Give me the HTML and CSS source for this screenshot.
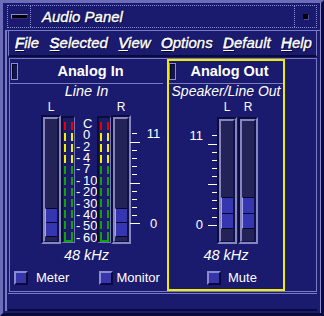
FILE: index.html
```html
<!DOCTYPE html>
<html lang="en">
<head>
<meta charset="utf-8">
<title>Audio Panel</title>
<link rel="stylesheet" href="styles.css">
</head>
<body>
<div class="window">
  <div class="titlebar">
    <div class="tb-btn tb-menu"><span class="menu-bar"></span></div>
    <div class="tb-title">Audio Panel</div>
    <div class="tb-btn tb-min"><span class="min-sq"></span></div>
  </div>
  <div class="client">
    <nav class="menubar">
      <span class="mi"><u>F</u>ile</span>
      <span class="mi"><u>S</u>elected</span>
      <span class="mi"><u>V</u>iew</span>
      <span class="mi"><u>O</u>ptions</span>
      <span class="mi"><u>D</u>efault</span>
      <span class="mi"><u>H</u>elp</span>
    </nav>
    <div class="content">
      <section class="panel panel-in">
        <div class="ph ph-in"><span class="toggle"></span><span class="ph-title">Analog In</span></div>
        <div class="sub">Line In</div>
        <div class="lr lr-in"><span>L</span><span>R</span></div>
        <div class="meters meters-in">
          <div class="fader fader-in" style="--below:4px;--th:29px"><div class="slot"><div class="thumb"><i></i><i></i></div></div></div>
          <div class="meter"><div class="bars"><span class="bar"></span><span class="bar"></span></div><div class="base"></div></div>
          <div class="scale">
            <div><span class="sg"></span>C</div>
            <div><span class="sg"></span>0</div>
            <div><span class="sg">-</span>2</div>
            <div><span class="sg">-</span>4</div>
            <div><span class="sg">-</span>7</div>
            <div><span class="sg">-</span>10</div>
            <div><span class="sg">-</span>20</div>
            <div><span class="sg">-</span>30</div>
            <div><span class="sg">-</span>40</div>
            <div><span class="sg">-</span>50</div>
            <div><span class="sg">-</span>60</div>
          </div>
          <div class="meter"><div class="bars"><span class="bar"></span><span class="bar"></span></div><div class="base"></div></div>
          <div class="fader fader-in" style="--below:4px;--th:29px"><div class="slot"><div class="thumb"><i></i><i></i></div></div></div>
          <div class="ticks ticks-in">
            <span class="tk"></span><span class="tk long"></span><span class="tk"></span><span class="tk"></span>
            <span class="tk"></span><span class="tk"></span><span class="tk long"></span><span class="tk"></span>
            <span class="tk"></span><span class="tk"></span><span class="tk"></span><span class="tk long"></span>
          </div>
          <div class="lbl lbl-in"><span>11</span><span>0</span></div>
        </div>
        <div class="rate">48 kHz</div>
        <div class="checks checks-in">
          <label class="cb"><span class="box"></span><span class="cbl cbl-meter">Meter</span></label>
          <label class="cb"><span class="box"></span><span class="cbl cbl-monitor">Monitor</span></label>
        </div>
      </section>
      <section class="panel panel-out">
        <div class="ph ph-out"><span class="toggle"></span><span class="ph-title">Analog Out</span></div>
        <div class="sub sub-out">Speaker/Line Out</div>
        <div class="lr lr-out"><span>L</span><span>R</span></div>
        <div class="meters meters-out">
          <div class="lbl lbl-out"><span>11</span><span>0</span></div>
          <div class="ticks ticks-out">
            <span class="tk"></span><span class="tk long"></span><span class="tk"></span><span class="tk"></span>
            <span class="tk"></span><span class="tk"></span><span class="tk long"></span><span class="tk"></span>
            <span class="tk"></span><span class="tk"></span><span class="tk"></span><span class="tk long"></span>
          </div>
          <div class="fader fader-out" style="--below:12px;--th:32px"><div class="slot"><div class="thumb"><i></i><i></i></div></div></div>
          <div class="fader fader-out" style="--below:12px;--th:32px"><div class="slot"><div class="thumb"><i></i><i></i></div></div></div>
        </div>
        <div class="rate">48 kHz</div>
        <div class="checks checks-out">
          <label class="cb"><span class="box"></span><span class="cbl cbl-mute">Mute</span></label>
        </div>
      </section>
    </div>
    <div class="status"></div>
  </div>
</div>
</body>
</html>
```

FILE: styles.css
```css
* { box-sizing: border-box; margin: 0; padding: 0; }
html, body { width: 324px; height: 316px; overflow: hidden; background: #1a1a6e; }
body { font-family: "Liberation Sans", Arial, sans-serif; color: #fff; }

.window {
  width: 324px; height: 316px;
  display: flex; flex-direction: column;
  border: 3px solid; border-color: #6c6cb8 #0a0a3a #0a0a3a #6c6cb8;
  padding: 2px 1px 2px 2px;
  box-shadow: inset -1px 0 0 #8a8ad2;
  background: #1a1a6e;
}

/* title bar */
.titlebar { flex: none; height: 23px; margin: 0 3px 0 2px; border: 1px dotted #8c8cd4; display: flex; }
.tb-btn { flex: none; display: flex; align-items: center; justify-content: center; }
.tb-menu { width: 23px; border-right: 1px dotted #8c8cd4; }
.tb-min { width: 22px; border-left: 1px dotted #8c8cd4; }
.menu-bar { width: 17px; height: 5px; background: #000; border: 1px solid #8c8cd4; border-right-color: #30307a; border-bottom-color: #30307a; }
.min-sq { width: 5px; height: 5px; background: #000; box-shadow: 1px 1px 0 #4a4aa0; }
.tb-title { flex: 1; padding-left: 11px; font-style: italic; font-size: 15px; line-height: 21px; -webkit-text-stroke: 0.35px #fff; text-shadow: 1px 1px 0 #05052a; }

/* client area */
.client { flex: 1; margin-top: 2px; border-top: 1px solid #7a7ac0; border-left: 2px solid #7a7ac0; padding: 0 3px 0 1px; display: flex; flex-direction: column; }
.menubar { flex: none; height: 26px; border-left: 1px solid #7a7ac0; border-right: 1px solid #7a7ac0; border-bottom: 2px solid #0a0a3a; display: flex; gap: 10.4px; padding-left: 6px; font-style: italic; font-size: 15px; line-height: 24px; -webkit-text-stroke: 0.35px #fff; text-shadow: 1px 1px 0 #05052a; }
.menubar u { text-decoration-thickness: 1px; text-underline-offset: 2px; }

.content { flex: none; height: 234px; margin: 1px 0 1px 1px; border: 1px solid #7a7ac0; display: flex; }
.panel { display: flex; flex-direction: column; }
.panel-in { width: 153px; }
.panel-out { width: 118px; margin-left: 4px; border: 2px solid #eded00; }

.ph { display: flex; align-items: flex-start; border-bottom: 1px solid #7a7ac0; }
.ph-in { height: 25px; }
.ph-out { height: 23px; }
.toggle { flex: none; width: 7px; height: 17px; border: 1px solid #8c8cd4; background: #14144c; box-shadow: inset 1px 1px 0 #05052a; }
.ph-in .toggle { margin: 4px 0 0 1px; }
.ph-out .toggle { margin: 2px 0 0 0; }
.ph-title { flex: 1; text-align: center; font-weight: bold; font-size: 14.5px; }
.ph-in .ph-title { line-height: 24px; }
.ph-out .ph-title { line-height: 20px; }

.sub { height: 14px; line-height: 14px; font-style: italic; font-size: 14.5px; text-align: center; white-space: nowrap; }
.sub-out { font-size: 14px; }

.lr { display: flex; margin-top: 3px; height: 13px; line-height: 13px; font-size: 12px; }
.lr span { width: 20px; text-align: center; }
.lr-in { padding-left: 31px; gap: 50px; }
.lr-out { padding-left: 48px; gap: 1px; }

.meters { display: flex; align-items: flex-start; }
.meters-in { margin-top: 1px; padding-left: 31px; height: 129px; }
.meters-out { margin-top: 3px; height: 127px; }

/* faders */
.fader { flex: none; width: 20px; border: 2px solid; border-color: #0c0c3a #8585c2 #8585c2 #0c0c3a; }
.fader-in { height: 129px; }
.fader-out { height: 127px; }
.fader-out + .fader-out { margin-left: 1px; }
.slot { height: 100%; border-style: solid; border-width: 2px 2px 1px 2px; border-color: #8585c2 #10104a #10104a #8585c2; background: #232358; display: flex; flex-direction: column; justify-content: flex-end; padding-bottom: var(--below); }
.thumb { flex: none; height: var(--th); border-top: 1px solid #05052a; border-bottom: 1px solid #05052a; border-left: 1px solid #a4a4e4; background: #3636b0; display: flex; flex-direction: column; }
.thumb i { flex: 1; }
.thumb i + i { border-top: 1px solid #05052a; }

/* level meters */
.meter { flex: none; width: 14px; height: 127px; margin-top: 1px; border-style: solid; border-width: 2px 1px 1px 2px; border-color: #0c0c3a #7474bc #7474bc #0c0c3a; background: #1c1c66; padding: 4px 1px 0; }
.bars { display: flex; gap: 5px; height: 118px; }
.bar { width: 2px; background: repeating-linear-gradient(to bottom, transparent 0 8.5px, #1c1c66 8.5px 11px), linear-gradient(to bottom, #e80000 0 10px, #f0f000 10px 43px, #10a010 43px); }
.base { height: 2px; background: #10a010; }

.scale { flex: none; width: 22px; padding: 2.8px 0 0 1px; font-size: 13px; line-height: 11.4px; }
.scale div { white-space: nowrap; }
.sg { display: inline-block; width: 7px; }

/* tick marks */
.ticks { flex: none; display: flex; flex-direction: column; }
.tk { display: flex; align-items: center; }
.tk::before { content: ""; height: 1px; width: 5px; background: #fff; }
.ticks-in { width: 10px; margin-left: -1px; padding-top: 14.9px; }
.ticks-in .tk { height: 8.18px; }
.ticks-in .tk::before { margin-left: 2px; }
.ticks-in .tk.long::before { width: 10px; margin-left: 0; }
.ticks-out { width: 9px; margin-left: 5px; padding-top: 14.94px; }
.ticks-out .tk { height: 8.12px; justify-content: flex-end; }
.ticks-out .tk.long::before { width: 9px; }

.lbl { flex: none; display: flex; flex-direction: column; justify-content: space-between; font-size: 13px; line-height: 12px; margin-top: 13px; width: 15px; }
.lbl-in { margin-left: 6px; height: 102px; text-align: center; }
.lbl-out { margin-left: 19px; height: 101px; text-align: right; }

.rate { margin-top: 3px; height: 16px; line-height: 16px; font-style: italic; font-size: 14.5px; text-align: center; }

/* toggles */
.checks { margin-top: 8px; height: 14px; font-size: 13px; line-height: 14px; }
.checks-in { display: grid; grid-template-columns: 85px auto; padding-left: 4px; }
.checks-out { display: flex; padding-left: 38px; }
.cb { display: flex; align-items: center; }
.box { flex: none; width: 14px; height: 14px; border: 2px solid; border-color: #8a8ad0 #0a0a3a #0a0a3a #8a8ad0; background: #3636aa; }
.cbl-meter { margin-left: 8px; }
.cbl-monitor { margin-left: 3.5px; }
.cbl-mute { margin-left: 7px; }

.status { flex: none; height: 18px; border-top: 1px solid #7a7ac0; border-bottom: 2px solid #0a0a3a; }
```
